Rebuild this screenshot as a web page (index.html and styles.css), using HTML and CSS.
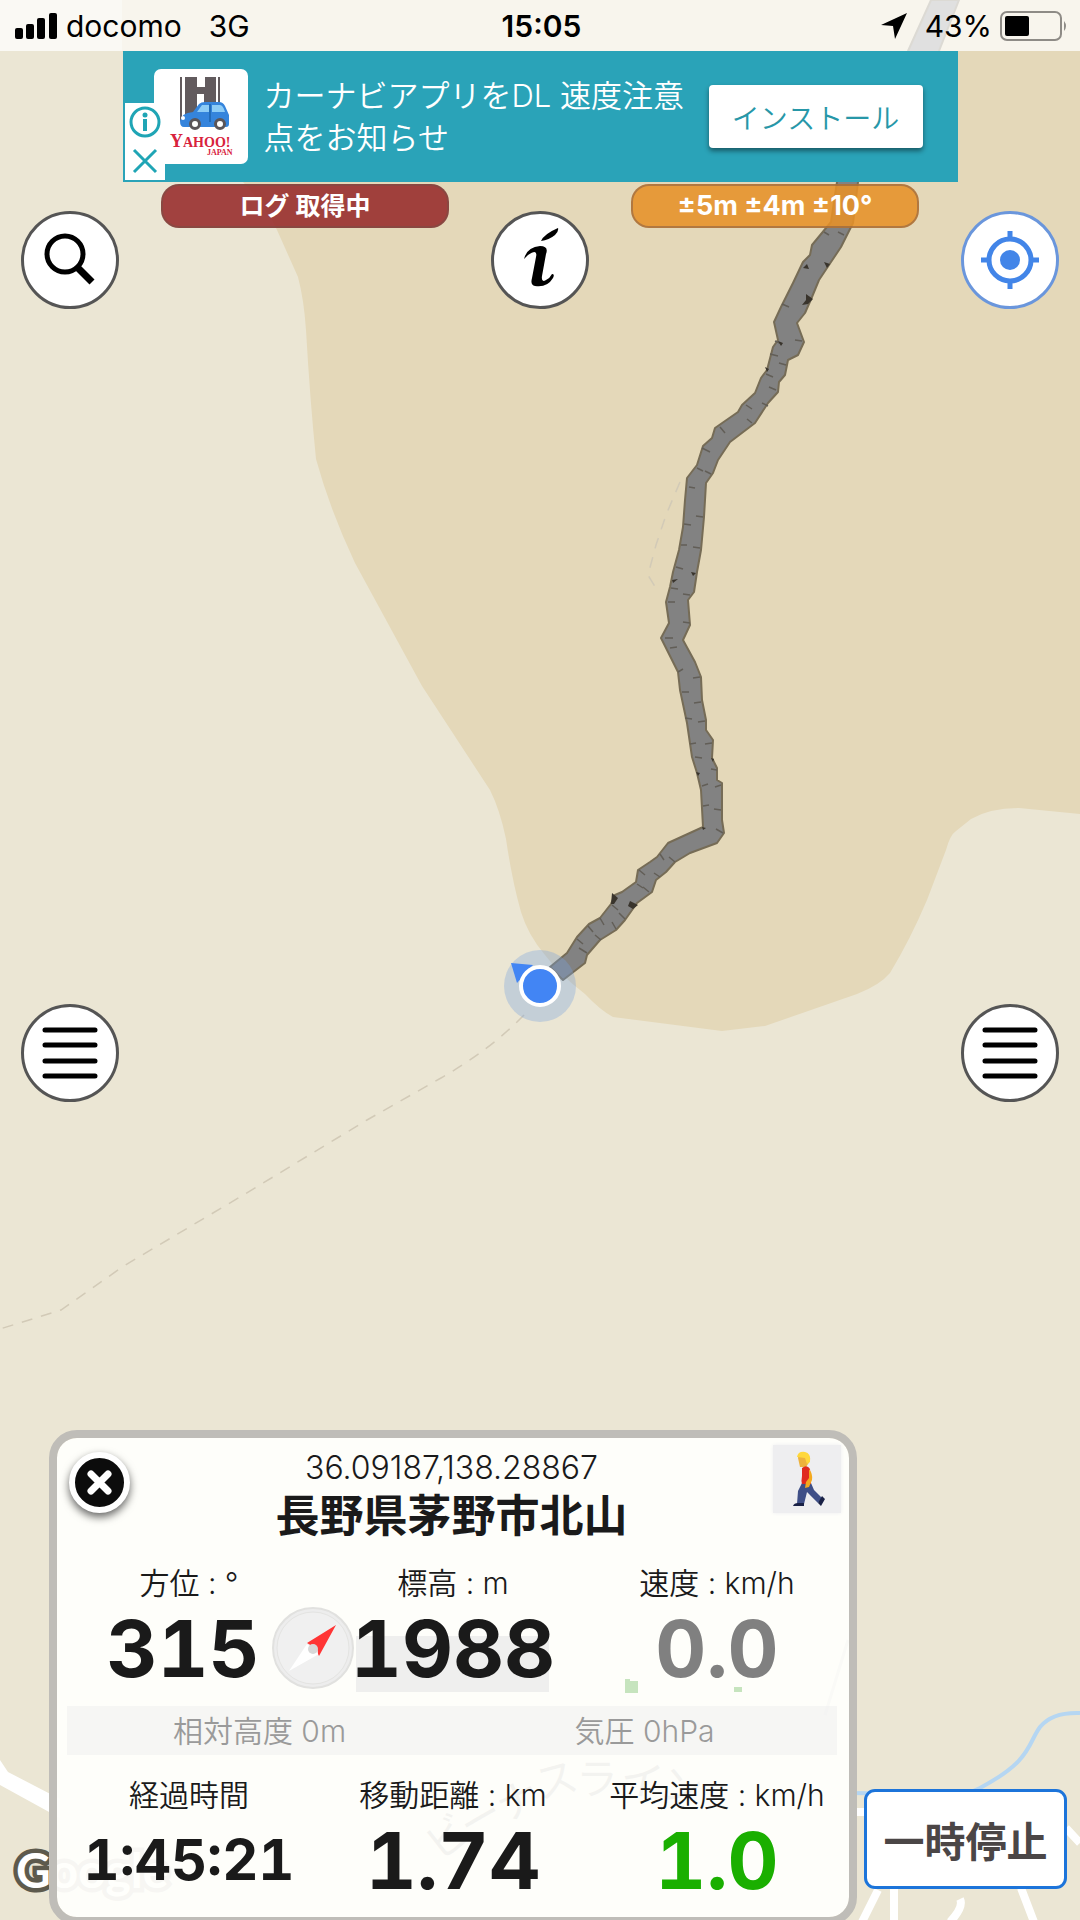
FILE: index.html
```html
<!DOCTYPE html>
<html lang="ja">
<head>
    <meta charset="UTF-8">
    <meta name="viewport" content="width=device-width, initial-scale=1.0">
    <title>ログ 取得中</title>
    <link rel="stylesheet" href="styles.css">
</head>
<body>
    <div class="screen">
        <!-- Map -->
        <svg class="map" viewBox="0 0 1080 1920" preserveAspectRatio="xMidYMid slice" aria-hidden="true">
            <rect width="1080" height="1920" fill="#ebe6d4"/>
            <path fill="#e4d8b9" d="M122 0V51L243 182Q268 210 277 230L298 277Q304 300 306 330Q310 400 316 459Q330 510 355 563L422 686L490 790Q500 810 506 839Q512 880 521 912Q528 935 545 955Q560 975 585 994Q600 1010 613 1017L722 1031L765 1026L857 994Q880 985 890 973Q910 940 927 900L946 850Q950 835 956 831L971 819Q990 808 1019 808L1080 814V0Z"/>
            <path class="trail" d="M680 482L666 515L656 545L648 575L657 590"/>
            <path class="trail" d="M524 1015Q490 1050 441 1078L367 1120L245 1194L122 1267Q90 1290 61 1310L0 1329"/>
            <!-- roads and river -->
            <path fill="#fff" d="M0 1760L8 1772L60 1799V1818L0 1785Z"/>
            <path fill="none" stroke="#b5d6f2" stroke-width="4" d="M1080 1713Q1052 1712 1040 1727C1027 1745 1032 1760 980 1788L962 1796Q920 1794 850 1793"/>
            <path class="road" d="M850 1812H875M1066 1828L1080 1843M878 1890L862 1922M894 1888V1922M960 1899Q964 1907 950 1922M1021 1888L1034 1922"/>
            <path fill="none" stroke="#999" stroke-width="3" d="M848 1640L825 1715"/>
            <g class="road-name">
                <text transform="translate(440 1862) rotate(-38)">ビ</text>
                <text transform="translate(470 1842) rotate(-30)">ー</text>
                <text transform="translate(505 1823) rotate(-25)">ナ</text>
                <text transform="translate(540 1800) rotate(-15)">ス</text>
                <text transform="translate(576 1794) rotate(0)">ラ</text>
                <text transform="translate(618 1790) rotate(12)">イ</text>
                <text transform="translate(658 1797) rotate(12)">ン</text>
            </g>
            <text class="brand" x="16" y="1888">Google</text>
            <!-- recorded route -->
            <path fill="#828282" stroke="#766c56" stroke-width="2" stroke-linejoin="round" d="M931 0L908 51L837 182L831 222L812 245L810 255L803 262L793 283L781 307L774 322L778 340L773 347L767 370L761 378L755 393L742 405L738 412L715 428L712 438L703 446L697 465L687 478L685 500L683 527L679 550L673 572L670 587L666 602L669 623L661 638L678 672L680 690L687 723L692 757L697 773L701 790L703 827L668 843L657 857L650 862L638 870L636 882L622 892L615 895L611 904L600 918L589 924L577 937L567 953L550 967L563 980L585 963L587 955L600 940L616 930L625 920L637 903L652 892L656 880L666 872L675 862L690 853L717 843L724 833L722 820L722 783L717 780L717 768L712 758L713 740L706 730L706 720L702 700L701 677L695 662L683 640L690 625L688 600L694 592L697 572L701 550L704 517L706 483L713 473L718 460L730 442L755 423L768 403L778 392L779 382L785 375L788 360L798 355L804 342L797 323L805 313L812 297L819 280L831 262L841 247L853 223L858 182L939 51L959 0Z"/>
            <path class="ticks" d="M824 232l5 3M844 235l-6-3M782 304l7 3M775 341l7 3M802 341l-7-1M770 354l8 2M786 365l-7-2M766 374l7 3M776 390l-7-3M746 405l6 4M768 406l-6-3M752 423l-5-4M720 427l5 6M702 448l8 4M697 468l6 3M711 474l-6-3M689 487l6 1M703 517l-7-1M684 524l7 1M681 545h6M700 548l-7-1M676 567l7 2M671 588l7 1M690 595l-7-1M668 602h7M690 623l-7-1M665 638h8M670 648l7-1M678 672l5-3M700 677l-7 1M682 692h7M701 702l-7 1M685 718l7 1M705 721l-7 1M690 744l6-1M712 743l-7 1M695 757l7 1M717 770l-6-1M702 786l6-2M721 785l-6 2M703 806l6-1M721 810l-7-1M723 833l-7-4M660 854l4 6M675 862l-6-5M639 870l6 5M660 877l-6-4M637 884l6 4M649 892l-6-5M612 905l6 5M625 919l-6-6M600 918l4 7M616 929l-4-7M588 926l5 6M601 940l-6-5M577 939l6 5M587 953l-8-5"/>
            <path fill="#39342c" d="M611 904l1-11 6 5-4 6zM628 906l2-5 8 4-5 4zM803 268l4-4 2 5zM824 262l6 2-3 4zM806 294l7 5-5 5-6 1 4-5zM778 341l5 2-2 3zM765 367l4 2-2 3zM672 580l6-1-5 4zM691 572l5 1-3 3zM711 758l3 1-1 3zM696 772l4 1-2 3zM702 827l4 1-3 2z"/>
            <!-- current position -->
            <circle cx="540" cy="986" r="36" fill="#7ba4dc" fill-opacity=".35"/>
            <path fill="#4285f4" d="M511 963l22 2-16 18z"/>
            <circle cx="540" cy="986" r="19" fill="#4285f4" stroke="#fff" stroke-width="4"/>
        </svg>

        <header class="status-bar">
            <div class="carrier">
                <svg width="42" height="26" viewBox="0 0 42 26" aria-hidden="true">
                    <rect x="0" y="15" width="8" height="11" rx="2"/>
                    <rect x="11" y="11" width="8" height="15" rx="2"/>
                    <rect x="22" y="5" width="8" height="21" rx="2"/>
                    <rect x="34" y="0" width="8" height="26" rx="2"/>
                </svg>
                <span>docomo</span>
                <span class="network">3G</span>
            </div>
            <strong class="clock">15:05</strong>
            <div class="battery">
                <svg width="26" height="26" viewBox="0 0 26 26" aria-hidden="true"><path d="M26 0L14 26L12 13L0 12Z"/></svg>
                <span class="percent">43%</span>
                <svg width="68" height="30" viewBox="0 0 68 30" aria-hidden="true">
                    <rect x="1" y="1" width="60" height="28" rx="6" fill="none" stroke="#8e8b86" stroke-width="2"/>
                    <rect x="5" y="5" width="24" height="20" rx="2"/>
                    <path d="M64 10q4 5 0 10z" fill="#8e8b86"/>
                </svg>
            </div>
        </header>

        <aside class="ad">
            <div class="ad-marks">
                <button type="button" aria-label="広告について">
                    <svg width="32" height="32" viewBox="0 0 32 32"><circle cx="16" cy="16" r="14" fill="none" stroke="#1fa5b5" stroke-width="3"/><circle cx="16" cy="9" r="2.5" fill="#1fa5b5"/><path d="M16 13v12" stroke="#1fa5b5" stroke-width="4"/></svg>
                </button>
                <button type="button" aria-label="広告を閉じる">
                    <svg width="32" height="32" viewBox="0 0 32 32"><path d="M5 5L27 27M27 5L5 27" stroke="#1fa5b5" stroke-width="3"/></svg>
                </button>
            </div>
            <svg class="ad-icon" viewBox="0 0 94 95" role="img" aria-label="Yahoo! JAPAN">
                <rect width="94" height="95" rx="7" fill="#fff"/>
                <path fill="#625b5e" d="M26 8h2v44h-2zM31 8h12v10h8V8h11v34H50V25h-7v17l-6 10h-6zM64 8h2v28h-2z"/>
                <path fill="#3584dc" d="M26 52q1-8 13-9l6-8q2-2 6-2h14q4 0 6 4l4 9v9q0 3-3 3H30q-4 0-4-6z"/>
                <path fill="#8dccf6" d="M43 43l5-7h7v7zM58 36h8q3 0 5 7H58z"/>
                <path fill="#226bb8" d="M55 35h2v18h-2z"/>
                <g fill="#fff" stroke="#5b5558" stroke-width="3"><circle cx="41" cy="55" r="4.5"/><circle cx="66" cy="55" r="4.5"/></g>
                <circle cx="29" cy="49" r="2" fill="#fff"/>
                <text class="yahoo" x="16" y="78">Y<tspan class="yahoo-small">AHOO!</tspan></text>
                <text class="japan" x="53" y="86">JAPAN</text>
            </svg>
            <p class="ad-text">カーナビアプリをDL 速度注意点をお知らせ</p>
            <button type="button" class="install">インストール</button>
        </aside>

        <div class="toolbar">
            <button type="button" class="round" aria-label="検索">
                <svg viewBox="0 0 98 98"><circle cx="44" cy="43" r="18" fill="none" stroke="#000" stroke-width="5"/><path d="M56 56L71 71" stroke="#000" stroke-width="7"/></svg>
            </button>
            <p class="pill recording">ログ 取得中</p>
            <button type="button" class="round" aria-label="情報">
                <svg viewBox="0 0 98 98"><path d="M50 30Q53 23 67 17Q68 20 64 24Q58 29 50 30ZM33 48Q36 36 49 35Q58 35 55 43L51 65Q50 72 55 69Q59 67 61 63Q64 63 62 67Q56 77 44 75Q39 74 41 67L45 46Q47 37 37 44Z"/></svg>
            </button>
            <p class="pill accuracy">±5m ±4m ±10°</p>
            <button type="button" class="round locate" aria-label="現在地">
                <svg viewBox="0 0 98 98"><g fill="none" stroke="#4285e8" stroke-width="5"><circle cx="49" cy="49" r="21"/><path d="M49 20v10M49 68v10M20 49h10M68 49h10"/></g><circle cx="49" cy="49" r="10" fill="#4285e8"/></svg>
            </button>
        </div>

        <div class="menus">
            <button type="button" class="round" aria-label="左メニュー">
                <svg viewBox="0 0 98 98"><path d="M24 26H74M24 41H74M24 57H74M24 72H74" stroke="#000" stroke-width="5" stroke-linecap="round"/></svg>
            </button>
            <button type="button" class="round" aria-label="右メニュー">
                <svg viewBox="0 0 98 98"><path d="M24 26H74M24 41H74M24 57H74M24 72H74" stroke="#000" stroke-width="5" stroke-linecap="round"/></svg>
            </button>
        </div>

        <div class="bottom">
            <section class="panel">
                <!-- buildings showing through the panel -->
                <svg class="buildings" width="260" height="64" viewBox="0 0 260 64" aria-hidden="true">
                    <path fill="#efefee" d="M0 4h193v56H0z"/>
                    <path fill="#c6e4be" d="M269 47h5v2h8v12h-13zM378 55h8v5h-8z"/>
                </svg>
                <div class="panel-head">
                    <button type="button" class="close" aria-label="閉じる">
                        <svg width="49" height="49" viewBox="0 0 49 49"><path d="M16 16L33 33M33 16L16 33" stroke="#fff" stroke-width="7" stroke-linecap="round"/></svg>
                    </button>
                    <div class="place">
                        <p class="coords">36.09187,138.28867</p>
                        <h1>長野県茅野市北山</h1>
                    </div>
                    <button type="button" class="walk" aria-label="徒歩">
                        <svg width="68" height="68" viewBox="0 0 68 68">
                            <path fill="#edb23d" d="M25 13q0-5 6-5 7 1 6 8l-4 6h-6z"/>
                            <path fill="#ffd83b" d="M24 12q1-6 8-5 6 1 5 10l-3 2-2-6z"/>
                            <path fill="#3f4f87" d="M29 38h9l3 7 8 8-4 5-9-9-2-2-3 12h-7l1-13z"/>
                            <path fill="#e02a20" d="M29 23q5-4 8 1l1 15h-9q-1-3 0-8z"/>
                            <path fill="#f4a91f" d="M36 24q4 5 3 11l-3 7-4 1 1-6 3-4z"/>
                            <path fill="#192146" d="M20 61q1-3 5-3h6v3zM45 58l4-7 3 3-4 7z"/>
                        </svg>
                    </button>
                </div>
                <dl class="stats">
                    <div class="stat">
                        <dt>方位 : °</dt>
                        <dd class="bearing">315</dd>
                        <svg class="compass" viewBox="0 0 82 82" aria-hidden="true">
                            <circle cx="41" cy="41" r="40" fill="#ededed" stroke="#e1e1df" stroke-width="2"/>
                            <circle cx="41" cy="41" r="36" fill="#f0f0f0" stroke="#e4e4e2"/>
                            <path fill="#fff" d="M17 64L35 37L47 47Z"/>
                            <path fill="#ff3535" d="M64 18L35 36L40 39Q46 39 46 47L47 49Z"/>
                            <circle cx="41" cy="42" r="5" fill="#d8d8d8"/>
                        </svg>
                    </div>
                    <div class="stat">
                        <dt>標高 : m</dt>
                        <dd>1988</dd>
                    </div>
                    <div class="stat">
                        <dt>速度 : km/h</dt>
                        <dd class="idle">0.0</dd>
                    </div>
                </dl>
                <div class="sensors">
                    <span>相対高度 0m</span>
                    <span>気圧 0hPa</span>
                </div>
                <dl class="stats">
                    <div class="stat">
                        <dt>経過時間</dt>
                        <dd class="elapsed">1:45:21</dd>
                    </div>
                    <div class="stat">
                        <dt>移動距離 : km</dt>
                        <dd>1.74</dd>
                    </div>
                    <div class="stat">
                        <dt>平均速度 : km/h</dt>
                        <dd class="average">1.0</dd>
                    </div>
                </dl>
            </section>
            <button type="button" class="pause">一時停止</button>
        </div>
    </div>
</body>
</html>
```

FILE: styles.css
```css
* {
    box-sizing: border-box;
}
body {
    margin: 0;
    font-family: Inter, "Noto Sans CJK JP", sans-serif;
    color: #1a1a1a;
}
p, h1, dl, dd {
    margin: 0;
}
button {
    padding: 0;
    border: none;
    background: none;
    font-family: inherit;
    color: inherit;
    cursor: pointer;
}
svg {
    display: block;
}
.screen {
    position: relative;
    display: flex;
    flex-direction: column;
    height: 100vh;
    overflow: hidden;
    isolation: isolate;
}

/* map */
.map {
    position: absolute;
    inset: 0;
    width: 100%;
    height: 100%;
    z-index: -1;
}
.trail {
    fill: none;
    stroke: #d2cab7;
    stroke-width: 1.5;
    stroke-dasharray: 11 9;
}
.road {
    fill: none;
    stroke: #fff;
    stroke-width: 8;
}
.ticks {
    fill: none;
    stroke: #625e57;
    stroke-width: 1.5;
}
.road-name {
    font-size: 42px;
    fill: #222;
}
.brand {
    font-family: Lato, sans-serif;
    font-size: 48px;
    font-weight: 700;
    fill: #fff;
    stroke: #5d5a4d;
    stroke-width: 9;
    paint-order: stroke;
}

/* status bar */
.status-bar {
    display: grid;
    grid-template-columns: 1fr auto 1fr;
    align-items: center;
    height: 51px;
    padding: 0 12px 0 15px;
    background: rgba(255, 255, 255, .75);
    font-size: 30px;
    color: #000;
}
.carrier, .battery {
    display: flex;
    align-items: center;
}
.carrier {
    gap: 9px;
}
.network {
    margin-left: 18px;
}
.clock {
    font-weight: 600;
}
.battery {
    justify-content: flex-end;
    gap: 8px;
}
.percent {
    margin-left: 10px;
}

/* ad banner */
.ad {
    position: relative;
    display: flex;
    align-items: center;
    width: 835px;
    max-width: 100%;
    height: 131px;
    margin: 0 auto 2px;
    padding: 0 35px 0 31px;
    background: #2aa3b8;
}
.ad-icon {
    flex: none;
    width: 94px;
    height: 95px;
}
.ad-marks {
    position: absolute;
    left: 2px;
    bottom: 2px;
    display: grid;
    gap: 7px;
    padding: 3px 4px;
    background: #fff;
}
.yahoo, .japan {
    font-family: "Liberation Serif", serif;
    font-weight: bold;
    fill: #d8223c;
}
.yahoo {
    font-size: 18px;
}
.yahoo-small {
    font-size: 14px;
}
.japan {
    font-size: 8px;
}
.ad-text {
    flex: 1;
    margin-left: 16px;
    font-size: 31px;
    font-weight: 350;
    line-height: 42px;
    color: #fff;
}
.install {
    flex: none;
    width: 214px;
    height: 63px;
    border-radius: 4px;
    background: #fff;
    box-shadow: 0 3px 5px rgba(0, 0, 0, .45);
    font-size: 28px;
    font-weight: 350;
    color: #2797a8;
}

/* round buttons and status pills */
.toolbar {
    display: flex;
    align-items: flex-start;
    gap: 42px;
    padding: 0 21px;
}
.round {
    flex: none;
    width: 98px;
    height: 98px;
    border: 3px solid #555;
    border-radius: 50%;
    background: #fff;
}
.round svg {
    width: 98px;
    height: 98px;
    margin: -3px;
}
.toolbar .round {
    margin-top: 27px;
}
.locate {
    border-color: #6a96dc;
}
.pill {
    flex: 1;
    height: 44px;
    border: 2px solid rgba(110, 80, 70, .45);
    border-radius: 18px;
    font-size: 25px;
    font-weight: 700;
    line-height: 40px;
    text-align: center;
    color: #fff;
}
.recording {
    background: rgba(150, 42, 42, .88);
}
.accuracy {
    background: rgba(230, 145, 40, .88);
    font-size: 27px;
}
.menus {
    flex: 1;
    display: flex;
    justify-content: space-between;
    align-items: flex-end;
    padding: 0 21px 328px;
}

/* bottom panel */
.bottom {
    display: flex;
    align-items: flex-end;
    gap: 7px;
    margin-bottom: -5px;
    padding: 0 13px 0 49px;
}
.panel {
    position: relative;
    isolation: isolate;
    flex: 1;
    padding-bottom: 12px;
    border: 8px solid #bfbdb8;
    border-radius: 28px;
    background: rgba(255, 255, 252, .95);
    background-clip: padding-box;
}
.buildings {
    position: absolute;
    left: 299px;
    top: 194px;
    overflow: visible;
    z-index: -1;
}
.panel-head {
    display: flex;
    align-items: flex-start;
    padding: 7px 8px 0 12px;
}
.close {
    flex: none;
    width: 61px;
    height: 61px;
    margin-top: 7px;
    border: 6px solid #fff;
    border-radius: 50%;
    background: #0c0c0c;
    box-shadow: 0 4px 8px rgba(0, 0, 0, .6);
}
.place {
    flex: 1;
    text-align: center;
}
.coords {
    font-size: 32px;
    font-weight: 350;
    line-height: 46px;
}
h1 {
    font-size: 44px;
    font-weight: 700;
    line-height: 50px;
}
.walk {
    flex: none;
    background: #eeeef0;
    box-shadow: 0 0 4px #eeeef0;
}
.stats {
    display: grid;
    grid-template-columns: repeat(3, 1fr);
    margin-top: 24px;
    text-align: center;
}
.stat {
    position: relative;
}
dt {
    font-size: 30px;
    font-weight: 350;
    line-height: 36px;
    white-space: pre;
}
dd {
    margin-top: 2px;
    font-size: 79px;
    font-weight: 700;
    line-height: 90px;
    font-variant-numeric: tabular-nums;
}
.bearing {
    padding-right: 12px;
}
.idle {
    color: #808080;
}
.average {
    color: #1aaf00;
}
.elapsed {
    font-size: 56px;
}
.compass {
    position: absolute;
    right: -33px;
    bottom: 4px;
    width: 82px;
    height: 82px;
}
.sensors {
    display: grid;
    grid-template-columns: 1fr 1fr;
    margin: 13px 12px -2px 10px;
    padding-top: 2px;
    background: rgba(240, 240, 240, .6);
    font-size: 30px;
    font-weight: 350;
    line-height: 47px;
    text-align: center;
    color: #9a9a9a;
}
.pause {
    flex: none;
    width: 203px;
    height: 100px;
    margin-bottom: 36px;
    border: 3px solid #1c74da;
    border-radius: 11px;
    background: #fff;
    font-size: 41px;
    font-weight: 700;
    color: #4b4646;
}
```
